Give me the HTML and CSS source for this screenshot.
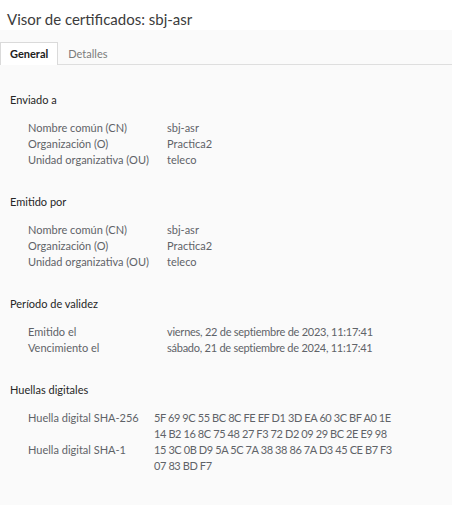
FILE: index.html
```
<!DOCTYPE html>
<html lang="es">
<head>
<meta charset="utf-8">
<title>Visor de certificados: sbj-asr</title>
<link rel="stylesheet" href="styles.css">
</head>
<body>
<div class="window">
  <header class="title">Visor de certificados: sbj-asr</header>
  <nav class="tabs">
    <div class="tab active">General</div>
    <div class="tab">Detalles</div>
  </nav>
  <main class="content">
    <section class="section">
      <h2 class="heading">Enviado a</h2>
      <div class="grid">
        <div class="label">Nombre común (CN)</div><div class="value">sbj-asr</div>
        <div class="label">Organización (O)</div><div class="value">Practica2</div>
        <div class="label">Unidad organizativa (OU)</div><div class="value">teleco</div>
      </div>
    </section>
    <section class="section">
      <h2 class="heading">Emitido por</h2>
      <div class="grid">
        <div class="label">Nombre común (CN)</div><div class="value">sbj-asr</div>
        <div class="label">Organización (O)</div><div class="value">Practica2</div>
        <div class="label">Unidad organizativa (OU)</div><div class="value">teleco</div>
      </div>
    </section>
    <section class="section">
      <h2 class="heading">Período de validez</h2>
      <div class="grid dates">
        <div class="label">Emitido el</div><div class="value">viernes, 22 de septiembre de 2023, 11:17:41</div>
        <div class="label">Vencimiento el</div><div class="value">sábado, 21 de septiembre de 2024, 11:17:41</div>
      </div>
    </section>
    <section class="section">
      <h2 class="heading">Huellas digitales</h2>
      <div class="grid hashes">
        <div class="label">Huella digital SHA-256</div>
        <div class="value"><span class="line">5F 69 9C 55 BC 8C FE EF D1 3D EA 60 3C BF A0 1E</span><span class="line">14 B2 16 8C 75 48 27 F3 72 D2 09 29 BC 2E E9 98</span></div>
        <div class="label">Huella digital SHA-1</div>
        <div class="value"><span class="line">15 3C 0B D9 5A 5C 7A 38 38 86 7A D3 45 CE B7 F3</span><span class="line">07 83 BD F7</span></div>
      </div>
    </section>
  </main>
</div>
</body>
</html>
```
FILE: styles.css
```
html, body {
  margin: 0;
  padding: 0;
  background: #fafafa;
}
.window {
  font-family: Lato, "Open Sans", sans-serif;
  font-size: 11px;
  color: #5f6368;
  width: 452px;
  height: 505px;
  overflow: hidden;
  background: #fafafa;
}
.title {
  height: 30px;
  background: #ffffff;
  box-sizing: border-box;
  padding: 10px 0 0 7px;
  font-size: 15px;
  line-height: 18px;
  color: #3c3c3c;
}
.tabs {
  height: 35px;
  box-sizing: border-box;
  border-bottom: 1px solid #dedede;
  display: flex;
  align-items: flex-end;
}
.tab {
  height: 23px;
  box-sizing: border-box;
  padding: 3px 9px 0 9px;
  line-height: 16px;
  font-size: 11px;
  color: #7a7a7a;
  margin-bottom: -1px;
  border: 1px solid transparent;
  border-bottom: none;
}
.tab.active {
  background: #ffffff;
  border-color: #dadada;
  color: #202020;
  font-weight: bold;
}
.content {
  padding: 27px 0 0 10px;
}
.section {
  margin-bottom: 26px;
}
.heading {
  margin: 0 0 12px 0;
  font-size: 11px;
  font-weight: normal;
  line-height: 16px;
  color: #262626;
}
.grid {
  display: grid;
  grid-template-columns: 139px 1fr;
  padding-left: 18px;
  line-height: 16px;
}
.grid.hashes {
  grid-template-columns: 126px 1fr;
}
.label, .value {
  color: #5f6368;
}
.dates .value {
  letter-spacing: -0.25px;
}
.hashes .value {
  letter-spacing: -0.4px;
}
.line {
  display: block;
}
```
